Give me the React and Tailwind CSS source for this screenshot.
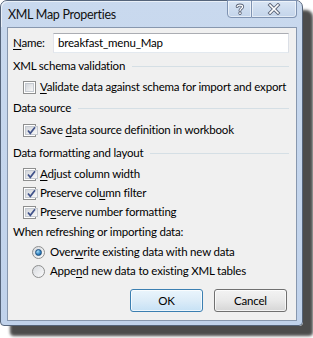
import React from "react";

const Check = ({ checked }) => (
  <span className="w-[13px] h-[13px] border border-[#8e8f8f] bg-white p-px shrink-0 flex">
    <span className="flex-1 flex items-center justify-center bg-gradient-to-br from-[#d3d6db] to-[#f8f8f8] border border-[#c4c9d0]">
      {checked && (
        <svg width="11" height="11" viewBox="0 0 11 11" className="shrink-0">
          <path d="M2 5.5 L4.3 8.3 L9 2.2" fill="none" stroke="#40528a" strokeWidth="1.7" />
        </svg>
      )}
    </span>
  </span>
);

const Radio = ({ checked }) => (
  <span className="w-[13px] h-[13px] rounded-full border border-[#8e8f8f] bg-gradient-to-br from-[#d6d9de] to-[#fbfbfb] flex items-center justify-center shrink-0">
    {checked && (
      <span className="w-[7px] h-[7px] rounded-full border border-[#1d4f7e] bg-[radial-gradient(circle_at_35%_30%,#a6dcf8,#2c7fc0_60%,#1b4f82)]" />
    )}
  </span>
);

const Header = ({ children, className }) => (
  <div className={"h-[18px] flex items-center " + className}>
    <span className="whitespace-nowrap">{children}</span>
    <span className="flex-1 h-px bg-[#d5dfe5] ml-[7px]" />
  </div>
);

const CheckRow = ({ checked, className, children }) => (
  <div className={"h-[18px] flex items-center pl-[10px] gap-[4px] " + className}>
    <Check checked={checked} />
    <span className="whitespace-nowrap">{children}</span>
  </div>
);

const RadioRow = ({ checked, className, children }) => (
  <div className={"h-[18px] flex items-center pl-[19px] gap-[5px] " + className}>
    <Radio checked={checked} />
    <span className="whitespace-nowrap">{children}</span>
  </div>
);

const U = ({ children }) => <span className="underline underline-offset-[2px]">{children}</span>;

export default function App() {
  return (
    <div className="w-[313px] h-[338px] bg-white font-['Lato','Noto_Sans',sans-serif] text-[11.5px] tracking-[-0.2px] text-black leading-none">
      <div className="w-[303px] h-[326px] rounded-t-[7px] rounded-b-[4px] border border-[#55647a] bg-gradient-to-b from-[#c9d9ee] to-[#c0d2eb] shadow-[10px_10px_3px_rgba(0,0,0,0.7)] flex flex-col">
        {/* title bar */}
        <div className="h-[26px] flex items-start shrink-0 rounded-t-[6px] shadow-[inset_1px_1px_0_rgba(255,255,255,0.6)]">
          <span className="pl-[7px] pt-[8px] text-[12.5px] tracking-[-0.3px] text-[#111] whitespace-nowrap">XML Map Properties</span>
          <div className="ml-auto mr-[5px] flex -mt-px">
            <div className="w-[25px] h-[18px] border border-[#7f93b2] rounded-bl-[4px] bg-gradient-to-b from-[#d9e5f4] to-[#c3d4ea] flex items-center justify-center shadow-[inset_0_0_0_1px_rgba(255,255,255,0.55)]">
              <svg width="10" height="12" viewBox="0 0 10 12">
                <path d="M2.2 3.6 C2.2 1.6 7.6 1.4 7.6 3.8 C7.6 5.6 5 5.6 5 7.6" fill="none" stroke="#5b6478" strokeWidth="3" strokeLinecap="round" />
                <path d="M2.2 3.6 C2.2 1.6 7.6 1.4 7.6 3.8 C7.6 5.6 5 5.6 5 7.6" fill="none" stroke="#fff" strokeWidth="1.2" strokeLinecap="round" />
                <circle cx="5" cy="10.2" r="1.4" fill="#fff" stroke="#5b6478" strokeWidth="0.9" />
              </svg>
            </div>
            <div className="w-[45px] h-[18px] border border-l-0 border-[#7f93b2] rounded-br-[4px] bg-gradient-to-b from-[#d9e5f4] to-[#c3d4ea] flex items-center justify-center shadow-[inset_0_0_0_1px_rgba(255,255,255,0.55)]">
              <svg width="14" height="12" viewBox="0 0 14 12">
                <path d="M3 2 L11 10 M11 2 L3 10" fill="none" stroke="#5b6478" strokeWidth="3.4" strokeLinecap="square" />
                <path d="M3 2 L11 10 M11 2 L3 10" fill="none" stroke="#fff" strokeWidth="1.6" strokeLinecap="square" />
              </svg>
            </div>
          </div>
        </div>

        {/* client area */}
        <div className="flex-1 ml-[6px] mr-[5px] mb-[4px] border border-[#8797ae] bg-[#f0f0f0] flex flex-col pl-[5px] pr-[7px] pt-[5px]">
          <div className="h-[20px] flex items-center">
            <span className="w-[40px]">
              <U>N</U>ame:
            </span>
            <div className="flex-1 h-[20px] border border-[#abadb3] border-b-[#e3e9ef] border-r-[#dbdfe6] border-l-[#e2e3ea] bg-white flex items-center pl-[4px]">
              breakfast_menu_Map
            </div>
          </div>

          <Header className="mt-[4px]">XML schema validation</Header>
          <CheckRow className="mt-[3px]">
            <U>V</U>alidate data against schema for import and export
          </CheckRow>

          <Header className="mt-[3px]">Data source</Header>
          <CheckRow checked className="mt-[4px]">
            Save <U>d</U>ata source definition in workbook
          </CheckRow>

          <Header className="mt-[5px]">Data formatting and layout</Header>
          <CheckRow checked className="mt-[3px]">
            <U>A</U>djust column width
          </CheckRow>
          <CheckRow checked className="mt-px">
            Preserve col<U>u</U>mn filter
          </CheckRow>
          <CheckRow checked className="mt-px">
            Pr<U>e</U>serve number formatting
          </CheckRow>

          <div className="h-[18px] flex items-center mt-[2px] whitespace-nowrap">When refreshing or importing data:</div>
          <RadioRow checked className="mt-[2px]">
            Over<U>w</U>rite existing data with new data
          </RadioRow>
          <RadioRow className="mt-px">
            Appe<U>n</U>d new data to existing XML tables
          </RadioRow>

          <div className="flex justify-end gap-[11px] mt-[9px] pr-[2px]">
            <button className="w-[73px] h-[23px] rounded-[3px] border border-[#3c7fb1] bg-gradient-to-b from-[#eaf5fc] via-[#dcecf8] to-[#c6e1f5] shadow-[inset_0_0_0_1px_rgba(255,255,255,0.7)]">
              OK
            </button>
            <button className="w-[73px] h-[23px] rounded-[3px] border border-[#707070] bg-gradient-to-b from-[#f3f3f3] via-[#e9e9e9] to-[#d6d6d6] shadow-[inset_0_0_0_1px_rgba(255,255,255,0.7)]">
              Cancel
            </button>
          </div>
        </div>
      </div>
    </div>
  );
}
